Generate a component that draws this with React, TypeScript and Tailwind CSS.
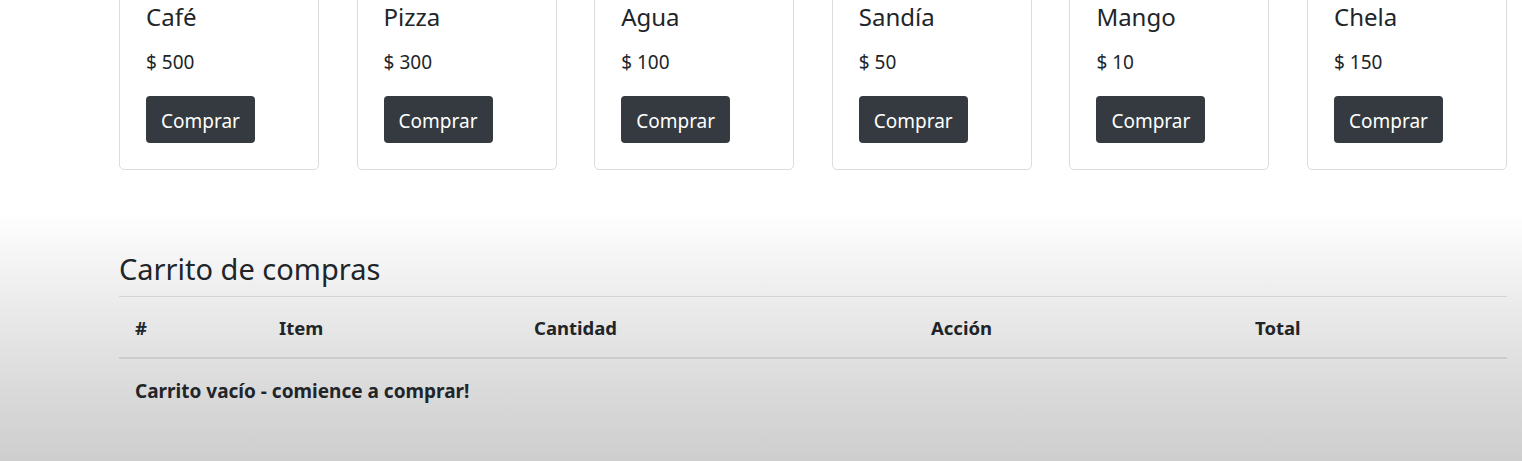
import React from "react";

const products = [
  { name: "Café", price: 500 },
  { name: "Pizza", price: 300 },
  { name: "Agua", price: 100 },
  { name: "Sandía", price: 50 },
  { name: "Mango", price: 10 },
  { name: "Chela", price: 150 },
];

export default function App() {
  return (
    <div
      className="h-[461px] text-[#212529] overflow-hidden bg-[linear-gradient(to_bottom,#ffffff_212px,#ececec_300px,#dadada_390px,#cecece_461px)]"
      style={{ fontFamily: '"Noto Sans", "Open Sans", sans-serif' }}
    >
      <div className="pl-[119px] pr-[15px]">
        <div className="flex justify-between mt-[-26px]">
          {products.map((p) => (
            <div
              key={p.name}
              className="w-[200px] border border-[#dcdcdc] rounded-[5px] bg-white px-[26px] pt-[26px] pb-[26px]"
            >
              <div className="text-[24px] leading-[32px] mb-[15px]">{p.name}</div>
              <div className="text-[19px] leading-[28px] mb-[20px]">$ {p.price}</div>
              <button className="bg-[#343a40] text-white text-[19px] leading-[27px] h-[47px] px-[15px] pt-[4px] rounded-[4px]">
                Comprar
              </button>
            </div>
          ))}
        </div>
      </div>
      <div className="pt-[80px] pl-[119px] pr-[15px]">
        <h3 className="text-[29px] leading-[37px] mb-[9px]">Carrito de compras</h3>
        <table className="w-full border-collapse">
          <thead>
            <tr className="border-t border-[#d4d4d4] border-b-2 border-b-[#cccccc] text-[18.5px]">
              <th className="w-[144px] text-left font-bold pl-[16px] pt-[2px] h-[61px]">#</th>
              <th className="w-[255px] text-left font-bold pl-[16px] pt-[2px]">Item</th>
              <th className="w-[397px] text-left font-bold pl-[16px] pt-[2px]">Cantidad</th>
              <th className="w-[324px] text-left font-bold pl-[16px] pt-[2px]">Acción</th>
              <th className="text-left font-bold pl-[16px] pt-[2px]">Total</th>
            </tr>
          </thead>
          <tbody>
            <tr>
              <th colSpan={5} className="text-left font-bold pl-[16px] pt-[2px] h-[64px] text-[19px]">
                Carrito vacío - comience a comprar!
              </th>
            </tr>
          </tbody>
        </table>
      </div>
    </div>
  );
}
